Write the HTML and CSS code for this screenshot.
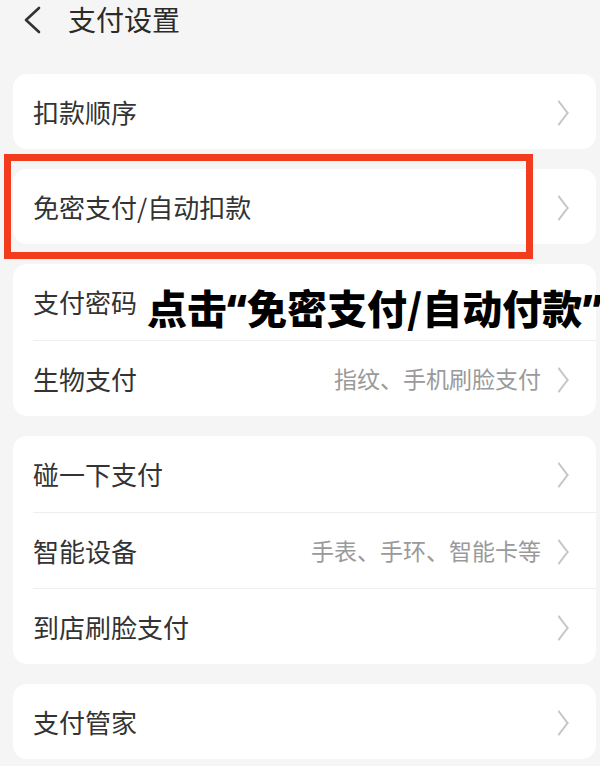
FILE: index.html
```html
<!DOCTYPE html>
<html lang="zh-CN">
<head>
<meta charset="utf-8">
<title>支付设置</title>
<link rel="stylesheet" href="styles.css">
</head>
<body>
<div class="page">
  <header class="header">
    <svg class="back" width="20" height="28" viewBox="0 0 20 28"><path d="M17 2 L4 14 L17 26" fill="none" stroke="#333" stroke-width="2.6" stroke-linecap="round" stroke-linejoin="round"/></svg>
    <h1 class="title">支付设置</h1>
  </header>

  <main class="groups">
    <section class="card single">
      <div class="row"><span class="label">扣款顺序</span><span class="chev"></span></div>
    </section>
    <section class="card single">
      <div class="row"><span class="label">免密支付/自动扣款</span><span class="chev"></span></div>
    </section>
    <section class="card">
      <div class="row"><span class="label">支付密码</span><span class="chev"></span></div>
      <div class="row"><span class="label">生物支付</span><span class="value">指纹、手机刷脸支付</span><span class="chev"></span></div>
    </section>
    <section class="card">
      <div class="row"><span class="label">碰一下支付</span><span class="chev"></span></div>
      <div class="row"><span class="label">智能设备</span><span class="value">手表、手环、智能卡等</span><span class="chev"></span></div>
      <div class="row"><span class="label">到店刷脸支付</span><span class="chev"></span></div>
    </section>
    <section class="card single">
      <div class="row"><span class="label">支付管家</span><span class="chev"></span></div>
    </section>
  </main>

  <div class="highlight"></div>
  <div class="caption">点击<span class="q">“</span>免密支付/自动付款<span class="q">”</span></div>
</div>
</body>
</html>
```

FILE: styles.css
```css
* { box-sizing: border-box; }
html, body {
  margin: 0;
  padding: 0;
  background: #f5f5f5;
}
body {
  font-family: "Noto Sans CJK SC", "Noto Sans", sans-serif;
  color: #333;
  width: 600px;
  height: 766px;
  overflow: hidden;
}
.page {
  position: relative;
  padding: 0 4px 0 13px;
}
.header {
  height: 38px;
  display: flex;
  align-items: center;
  padding-left: 9px;
}
.back {
  display: block;
  margin-top: 1px;
}
.title {
  margin: 0 0 0 26px;
  font-size: 28px;
  font-weight: 400;
  color: #2b2b2b;
  line-height: 38px;
}
.groups {
  margin-top: 36px;
  display: flex;
  flex-direction: column;
  gap: 20px;
}
.card {
  background: #fff;
  border-radius: 14px;
  padding-left: 20px;
}
.row {
  height: 76px;
  display: flex;
  align-items: center;
  padding-right: 27px;
  border-top: 1px solid #eeeeee;
}
.row:first-child { border-top: none; }
.card.single .row { height: 75px; }
.label {
  font-size: 26px;
  color: #333;
  flex: 1;
  line-height: 1;
}
.value {
  font-size: 23px;
  color: #9a9a9a;
  margin-right: 15px;
  line-height: 1;
}
.chev {
  width: 13px;
  height: 22px;
  position: relative;
  flex: none;
}
.chev::before {
  content: "";
  position: absolute;
  left: -5px;
  top: 4px;
  width: 14px;
  height: 14px;
  border-top: 2px solid #c6c6c6;
  border-right: 2px solid #c6c6c6;
  transform: rotate(45deg) skew(8deg, 8deg);
}
.highlight {
  position: absolute;
  left: 4px;
  top: 154px;
  width: 529px;
  height: 105px;
  border: 7px solid #f33b1d;
}
.caption {
  position: absolute;
  left: 147px;
  top: 285px;
  font-size: 40px;
  font-weight: 900;
  color: #000;
  white-space: nowrap;
  line-height: 44px;
}
.caption .q {
  font-family: "Noto Sans", "DejaVu Sans", sans-serif;
  font-weight: 900;
}
```
